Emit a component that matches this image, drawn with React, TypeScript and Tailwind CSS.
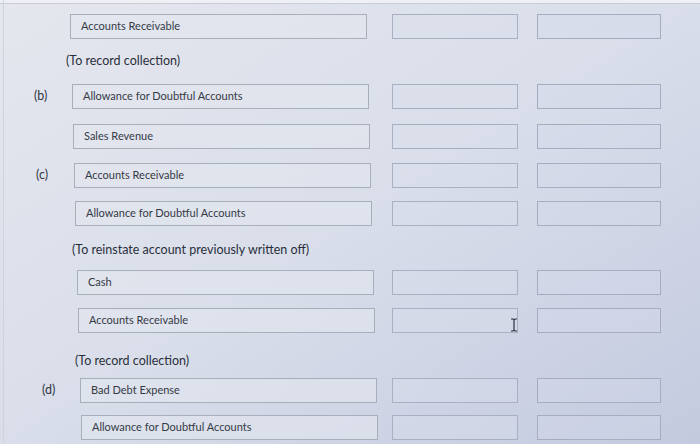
const font = { fontFamily: 'Lato, "Open Sans", sans-serif' }

type Row =
  | { kind: 'entry'; label?: string; lx?: number; account: string; mt: number; pl: number; cursor?: boolean }
  | { kind: 'note'; text: string; mt: number; pl: number }

const rows: Row[] = [
  { kind: 'entry', account: 'Accounts Receivable', mt: 14, pl: 70 },
  { kind: 'note', text: '(To record collection)', mt: 13, pl: 66 },
  { kind: 'entry', label: '(b)', lx: 34, account: 'Allowance for Doubtful Accounts', mt: 14, pl: 72 },
  { kind: 'entry', account: 'Sales Revenue', mt: 15, pl: 73 },
  { kind: 'entry', label: '(c)', lx: 36, account: 'Accounts Receivable', mt: 14, pl: 74 },
  { kind: 'entry', account: 'Allowance for Doubtful Accounts', mt: 13, pl: 75 },
  { kind: 'note', text: '(To reinstate account previously written off)', mt: 15, pl: 72 },
  { kind: 'entry', account: 'Cash', mt: 11, pl: 77 },
  { kind: 'entry', account: 'Accounts Receivable', mt: 13, pl: 78, cursor: true },
  { kind: 'note', text: '(To record collection)', mt: 19, pl: 75 },
  { kind: 'entry', label: '(d)', lx: 42, account: 'Bad Debt Expense', mt: 8, pl: 80 },
  { kind: 'entry', account: 'Allowance for Doubtful Accounts', mt: 12, pl: 81 },
]

function IBeam() {
  return (
    <svg width="8" height="14" viewBox="0 0 8 14" className="absolute right-[-1px] top-[9px]">
      <path d="M1 1h2l1 1 1-1h2M4 2v10M1 13h2l1-1 1 1h2" fill="none" stroke="#2d3240" strokeWidth="1.2" />
    </svg>
  )
}

function Entry({ row }: { row: Extract<Row, { kind: 'entry' }> }) {
  return (
    <div className="flex items-center h-[25px]" style={{ marginTop: row.mt }}>
      <div className="w-[70px] shrink-0 text-[12.5px] text-[#303542]" style={{ paddingLeft: row.lx ?? 36 }}>
        {row.label}
      </div>
      <div
        className="h-[25px] w-[297px] shrink-0 border border-[#a9aebb] bg-[#e3e6ee]/60 flex items-center pl-[10px] text-[11px] text-[#353a47]"
        style={{ marginLeft: row.pl - 70 }}
      >
        {row.account}
      </div>
      <div className="relative h-[25px] w-[126px] ml-auto shrink-0 border border-[#a9b0c2] bg-[#dadfec]/40">
        {row.cursor && <IBeam />}
      </div>
      <div className="h-[25px] w-[124px] ml-[19px] mr-[39px] shrink-0 border border-[#a6adc0] bg-[#d4daea]/40" />
    </div>
  )
}

export default function App() {
  return (
    <div
      className="relative w-[700px] h-[444px] overflow-hidden bg-gradient-to-br from-[#e5e7ee] via-[#d9deea] to-[#c3cadf]"
      style={font}
    >
      <div className="absolute inset-x-0 top-0 h-[4px] bg-[#eef0f6] border-b border-[#c9cdd8]" />
      <div className="absolute left-[3px] top-0 bottom-0 w-px bg-[#cfd3dd]" />
      <div className="flex flex-col">
        {rows.map((row, i) =>
          row.kind === 'entry' ? (
            <Entry key={i} row={row} />
          ) : (
            <div
              key={i}
              className="h-[18px] flex items-center text-[12.5px] text-[#2a2f3b]"
              style={{ marginTop: row.mt, paddingLeft: row.pl }}
            >
              {row.text}
            </div>
          )
        )}
      </div>
    </div>
  )
}
